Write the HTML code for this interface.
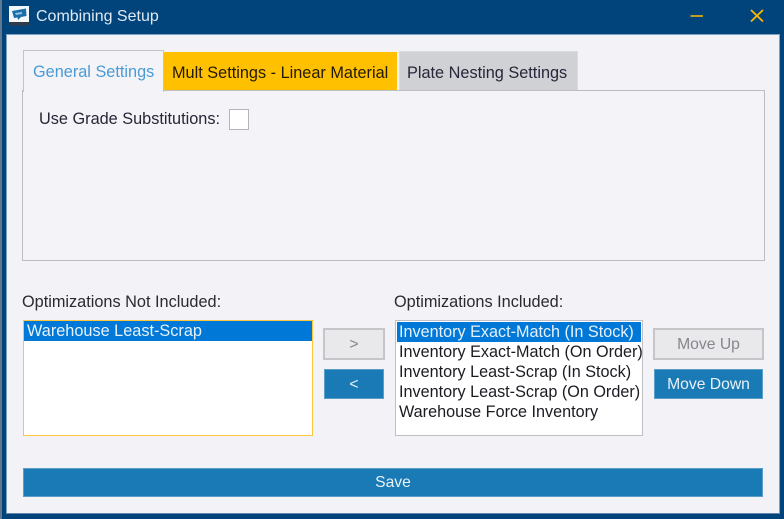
<!DOCTYPE html>
<html><head><meta charset="utf-8"><style>
html,body{margin:0;padding:0;background:#01447c}
body{width:784px;height:519px;position:relative;overflow:hidden;font-family:"Liberation Sans",sans-serif;font-size:16.3px;color:#222}
div{position:absolute;box-sizing:border-box;white-space:nowrap}
#w{left:0;top:0;width:784px;height:519px;filter:blur(.35px);background:#01447c}
.t{line-height:24px;height:20px}
.btn{text-align:center;color:#e8f1f8;background:#1a7ab5;border:1px solid #5b9fc9;font-size:15.7px}
.off{color:#85858d;background:#e9e9ec;border:2px solid #c6c6ca}
.i{left:0;width:100%;height:20px;line-height:20px;padding-left:3px;font-size:16.2px}
.sel{background:#0078d7;color:#e6f1fb}
</style></head><body><div id="w">
<div style="left:0;top:0;width:2px;height:519px;background:#5f7890"></div>
<div style="left:2px;top:0;width:4px;height:519px;background:#01447c"></div>
<div style="left:6px;top:34px;width:774px;height:480px;background:#f2f2f7;border:1px solid #7fa0bf;border-bottom-color:#5f86aa"></div>

<svg style="position:absolute;left:9px;top:5px" width="21" height="21" viewBox="0 0 21 21">
<rect x="0" y="1" width="20" height="16" fill="#f4f7fa"/>
<rect x="0" y="17" width="20" height="3.500" fill="#2f3a4a"/>
<path d="M3 6 L17 3.500 L17.500 11 L12 12 L9 15 L8.500 12.500 L5 13 Z" fill="#1b6fa8"/>
<path d="M6 8 L13 7 L13 9 L7 10 Z" fill="#8ec4e6"/>
</svg>
<div class="t" style="left:36px;top:5px;color:#dfe9f2;font-size:16px">Combining Setup</div>
<svg style="position:absolute;left:680px;top:0" width="104" height="40" viewBox="0 0 104 40">
<path d="M10.500 16 H23" stroke="#ffb900" stroke-width="1.500" fill="none"/>
<path d="M71 10 L83 21.500 M83 10 L71 21.500" stroke="#ffb900" stroke-width="1.800" fill="none"/>
</svg>

<div style="left:22px;top:90px;width:743px;height:171px;background:#f3f3f8;border:1px solid #bdbdc1"></div>
<div style="left:23px;top:50px;width:141px;height:42px;background:#f3f3f8;border:1px solid #c4c4c8;border-bottom:0"></div>
<div class="t" style="left:33px;top:60px;color:#4a9bd4">General Settings</div>
<div style="left:164px;top:52px;width:233px;height:38px;background:#ffc000"></div>
<div class="t" style="left:172px;top:61px;color:#231a05">Mult Settings - Linear Material</div>
<div style="left:399px;top:51px;width:179px;height:39px;background:#d0d1d5;border:1px solid #dcdce0;border-bottom:0"></div>
<div class="t" style="left:407px;top:61px;color:#26263a">Plate Nesting Settings</div>

<div class="t" style="left:39px;top:107px;color:#262636">Use Grade Substitutions:</div>
<div style="left:229px;top:109px;width:20px;height:21px;background:#fff;border:1px solid #b5b5b9"></div>

<div class="t" style="left:22px;top:290px;color:#2a2a30">Optimizations Not Included:</div>
<div style="left:23px;top:320px;width:290px;height:116px;background:#fff;border:1px solid #ffc53d">
<div class="i sel" style="top:0;line-height:20px;font-size:16.3px">Warehouse Least-Scrap</div>
</div>

<div class="btn off" style="left:323px;top:328px;width:62px;height:32px;line-height:29px">&gt;</div>
<div class="btn" style="left:324px;top:369px;width:60px;height:30px;line-height:30px">&lt;</div>

<div class="t" style="left:394px;top:290px;color:#2a2a30">Optimizations Included:</div>
<div style="left:395px;top:320px;width:248px;height:116px;background:#fff;border:1px solid #c0c0c4;color:#1b1b22">
<div class="i sel" style="top:1px;left:1px;width:244px;padding-left:2px">Inventory Exact-Match (In Stock)</div>
<div class="i" style="top:21px;padding-left:3px">Inventory Exact-Match (On Order)</div>
<div class="i" style="top:41px;padding-left:3px">Inventory Least-Scrap (In Stock)</div>
<div class="i" style="top:61px;padding-left:3px">Inventory Least-Scrap (On Order)</div>
<div class="i" style="top:81px;padding-left:3px">Warehouse Force Inventory</div>
</div>

<div class="btn off" style="left:653px;top:328px;width:111px;height:32px;line-height:29px">Move Up</div>
<div class="btn" style="left:654px;top:369px;width:109px;height:30px;line-height:30px">Move Down</div>
<div class="btn" style="left:23px;top:468px;width:740px;height:29px;line-height:27px">Save</div>
</div></body></html>
